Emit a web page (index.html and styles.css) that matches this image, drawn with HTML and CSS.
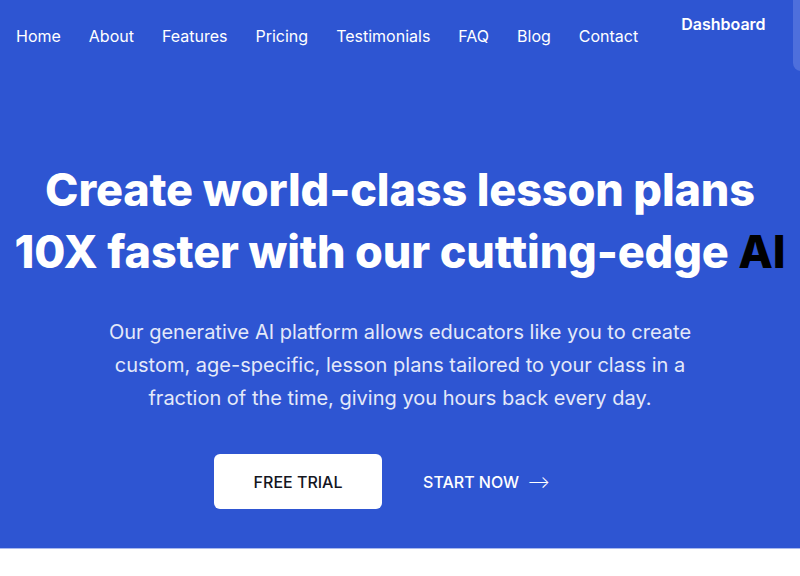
FILE: index.html
```html
<!DOCTYPE html>
<html>
<head>
<meta charset="utf-8">
<link rel="stylesheet" href="styles.css">
</head>
<body>
<section class="hero">
  <header class="topbar">
    <nav class="nav">
      <a href="#">Home</a>
      <a href="#">About</a>
      <a href="#">Features</a>
      <a href="#">Pricing</a>
      <a href="#">Testimonials</a>
      <a href="#">FAQ</a>
      <a href="#">Blog</a>
      <a href="#">Contact</a>
    </nav>
    <a class="dash" href="#">Dashboard</a>
    <span class="edge-btn"></span>
  </header>
  <div class="content">
    <h1 class="title">Create world-class lesson plans<br>10X faster with our cutting-edge <span class="ai">AI</span></h1>
    <p class="lead">Our generative AI platform allows educators like you to create custom, age-specific, lesson plans tailored to your class in a fraction of the time, giving you hours back every day.</p>
    <div class="actions">
      <a class="btn-primary" href="#">FREE TRIAL</a>
      <a class="btn-link" href="#">START NOW <span class="arrow">⟶</span></a>
    </div>
  </div>
</section>
</body>
</html>
```
FILE: styles.css
```css
* { box-sizing: border-box; }
html, body { margin: 0; padding: 0; }
body {
  font-family: Inter, "Noto Sans", sans-serif;
  background: #ffffff;
  overflow: hidden;
}
a { text-decoration: none; color: inherit; }
.hero {
  background: #2e55d2;
  height: 549px;
  border-bottom: 1px solid #a9b9ee;
  position: relative;
  overflow: hidden;
}
.topbar {
  display: flex;
  align-items: flex-start;
  padding: 0 16px;
  height: 80px;
}
.nav {
  display: flex;
  gap: 28px;
  padding-top: 26px;
  font-size: 16px;
  font-weight: 400;
  color: #ffffff;
  line-height: 20px;
}
.dash {
  margin-left: 43px;
  padding-top: 14px;
  font-size: 16px;
  font-weight: 600;
  color: #ffffff;
  line-height: 20px;
}
.edge-btn {
  position: absolute;
  left: 793px;
  top: -10px;
  width: 40px;
  height: 81px;
  border-radius: 8px;
  background: #4e6fdc;
}
.content {
  display: flex;
  flex-direction: column;
  align-items: center;
  text-align: center;
  padding-top: 79px;
}
.title {
  margin: 0;
  font-size: 45px;
  line-height: 62px;
  font-weight: 800;
  color: #ffffff;
  letter-spacing: -0.15px;
  white-space: nowrap;
}
.ai { color: #000000; }
.lead {
  margin: 33px 0 0;
  width: 610px;
  font-size: 20px;
  line-height: 33px;
  color: #e4e9f9;
}
.actions {
  display: flex;
  align-items: center;
  gap: 41px;
  margin-top: 39px;
  margin-left: -36px;
}
.btn-primary {
  display: flex;
  align-items: center;
  justify-content: center;
  width: 168px;
  height: 55px;
  border-radius: 6px;
  background: #ffffff;
  color: #14161f;
  font-size: 16px;
  font-weight: 500;
}
.btn-link {
  color: #ffffff;
  font-size: 16px;
  font-weight: 500;
  display: flex;
  align-items: center;
  gap: 8px;
}
.arrow { font-size: 17px; font-weight: 300; }
```
